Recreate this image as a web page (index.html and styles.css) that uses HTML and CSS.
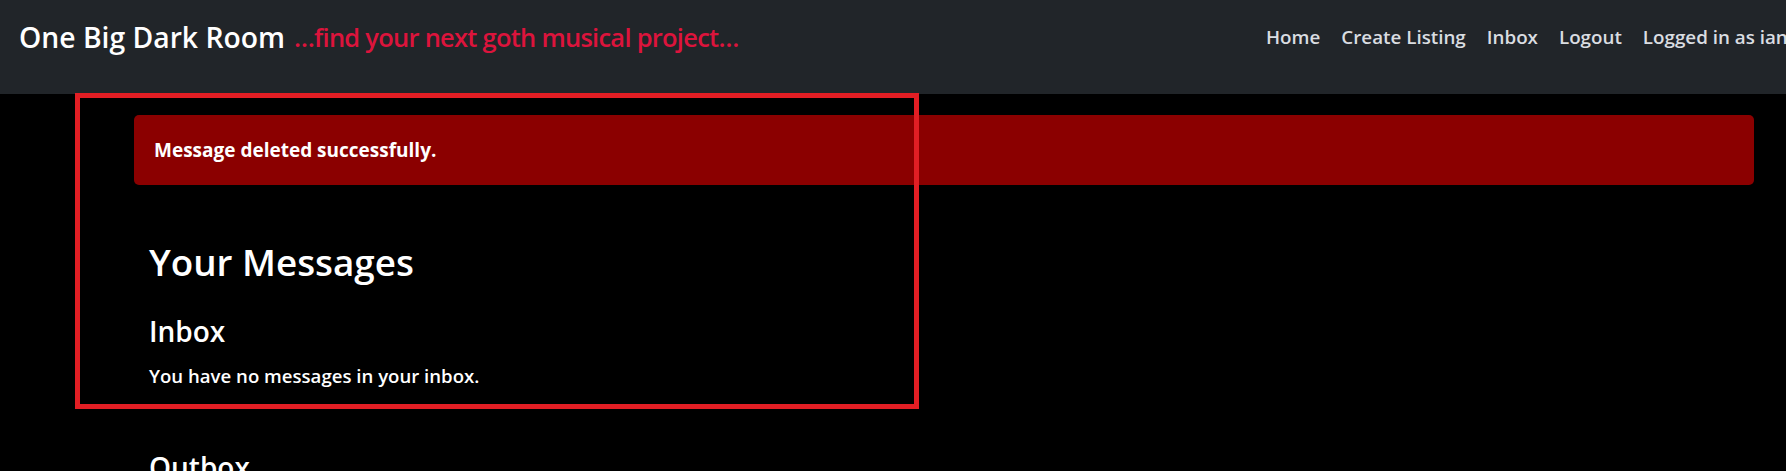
FILE: index.html
```html
<!DOCTYPE html>
<html lang="en">
<head>
<meta charset="utf-8">
<title>One Big Dark Room - Inbox</title>
<link rel="stylesheet" href="styles.css">
</head>
<body>
<header class="navbar">
  <a class="brand" href="#">One Big Dark Room</a>
  <span class="tagline">…find your next goth musical project…</span>
  <nav class="nav">
    <a class="nav-link" href="#">Home</a>
    <a class="nav-link" href="#">Create Listing</a>
    <a class="nav-link" href="#">Inbox</a>
    <a class="nav-link" href="#">Logout</a>
    <span class="nav-text">Logged in as ianmcdonald</span>
  </nav>
</header>
<main class="main">
  <div class="alert">Message deleted successfully.</div>
  <section class="content">
    <h1 class="page-title">Your Messages</h1>
    <h3 class="section-title">Inbox</h3>
    <p class="empty">You have no messages in your inbox.</p>
    <h3 class="section-title outbox">Outbox</h3>
    <p class="empty">You have no messages in your outbox.</p>
  </section>
</main>
<div class="highlight"></div>
</body>
</html>
```
FILE: styles.css
```css
html {
  scrollbar-width: none;
}
html::-webkit-scrollbar,
body::-webkit-scrollbar {
  display: none;
}
html, body {
  overflow-x: hidden;
}
body {
  margin: 0;
  background: #000;
  color: #fff;
  font-family: "Open Sans", "Noto Sans", sans-serif;
  position: relative;
  min-height: 471px;
}
.navbar {
  background: #212529;
  height: 94px;
  box-sizing: border-box;
  padding: 0 0 20px 19px;
  display: flex;
  align-items: center;
  white-space: nowrap;
}
.brand {
  color: #fff;
  text-decoration: none;
  font-size: 28.3px;
  font-weight: 600;
}
.tagline {
  color: #dc143c;
  font-size: 25.5px;
  font-weight: 600;
  letter-spacing: -0.75px;
  margin-left: 9px;
}
.nav {
  flex: 0 0 520px;
  min-width: 0;
  margin-left: auto;
  display: flex;
  align-items: center;
  gap: 21px;
  font-size: 18.8px;
  font-weight: 600;
}
.nav-link,
.nav-text {
  color: #dadde1;
  text-decoration: none;
}
.main {
  padding: 21px 32px 0 134px;
}
.alert {
  background: #8b0000;
  color: #fff;
  border-radius: 5px;
  padding: 22px 20px;
  line-height: 26px;
  font-size: 19px;
  font-weight: 700;
}
.content {
  padding-left: 15px;
}
.page-title {
  margin: 55px 0 0;
  font-size: 36.8px;
  font-weight: 600;
  line-height: 1.2;
}
.section-title {
  margin: 31px 0 0;
  font-size: 28px;
  font-weight: 600;
  line-height: 1.2;
}
.section-title.outbox {
  margin-top: 61px;
}
.empty {
  margin: 13px 0 0;
  font-size: 18.6px;
  font-weight: 600;
  line-height: 1.5;
}
.highlight {
  position: absolute;
  left: 75px;
  top: 93px;
  width: 844px;
  height: 316px;
  box-sizing: border-box;
  border: 5px solid #e21e24;
  pointer-events: none;
}
```
